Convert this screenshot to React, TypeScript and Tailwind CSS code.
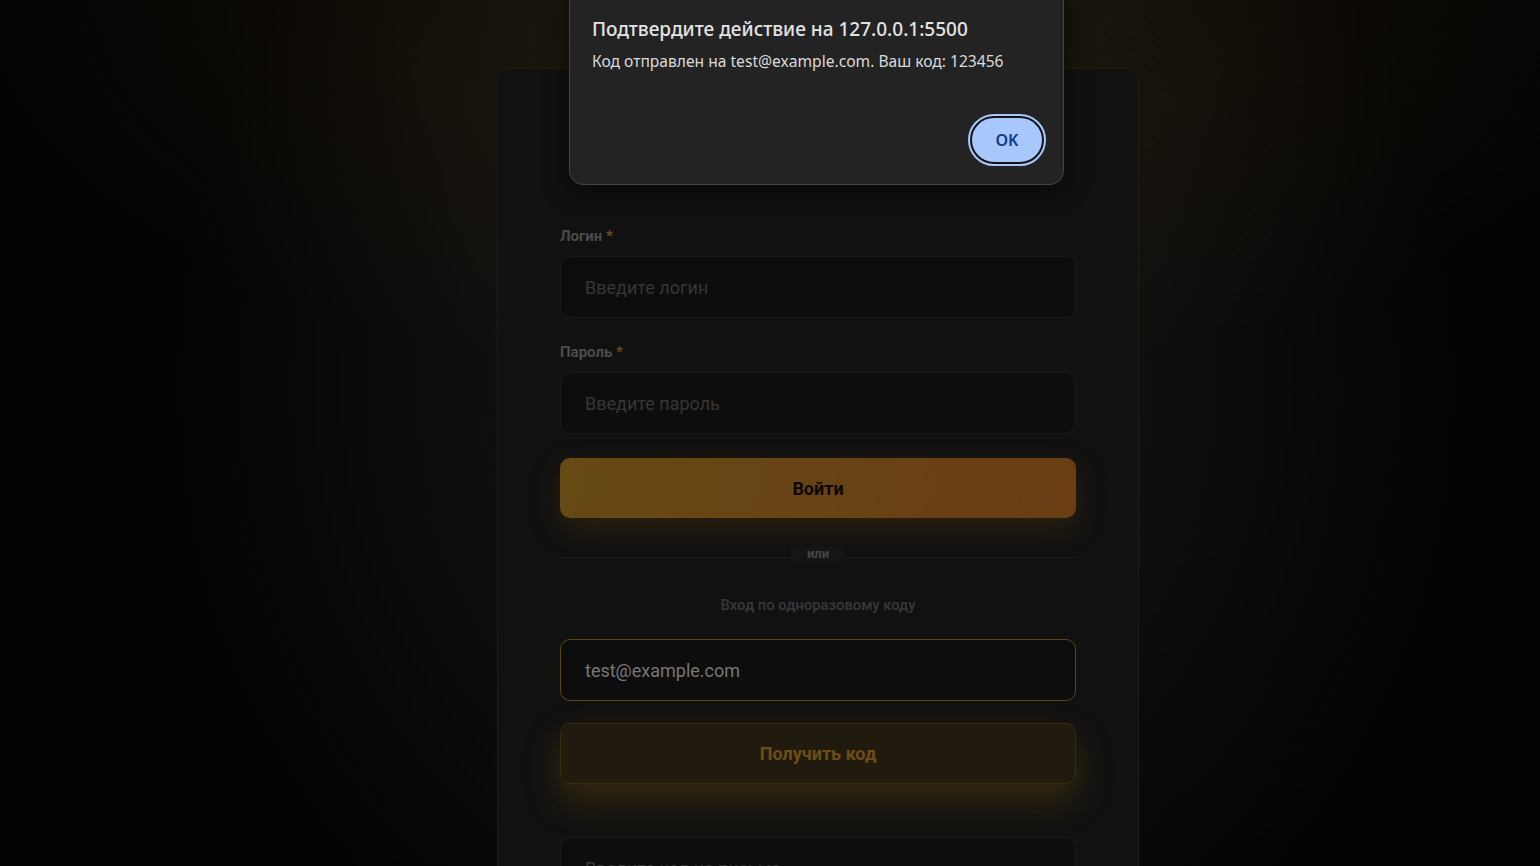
import React from "react";

const form = "font-['Roboto','Liberation_Sans',sans-serif]";

function Field({ label, placeholder }: { label: string; placeholder: string }) {
  return (
    <div className="flex flex-col">
      <label className="text-[15px] leading-5 font-bold text-[#4b4b4b]">
        {label} <span className="text-[#6b4f14]">*</span>
      </label>
      <div className="mt-[10px] h-[62px] rounded-[10px] border border-[#1d1a12] bg-[#0d0d0d] px-6 flex items-center text-[18px] text-[#363636]">
        {placeholder}
      </div>
    </div>
  );
}

function AlertDialog() {
  return (
    <div className="absolute left-[569px] top-[-20px] w-[495px] h-[205px] rounded-[14px] border border-[#444] bg-[#232323] shadow-[0_6px_24px_rgba(0,0,0,0.6)] font-['Noto_Sans','Open_Sans',sans-serif] flex flex-col pl-[22px] pr-[19px] pt-[33px] pb-[20px]">
      <h2 className="text-[19px] leading-[30px] font-medium text-[#e3e3e3]">Подтвердите действие на 127.0.0.1:5500</h2>
      <p className="mt-[5px] text-[15.6px] leading-6 text-[#dadada]">Код отправлен на test@example.com. Ваш код: 123456</p>
      <div className="mt-auto flex justify-end">
        <button className="w-[74px] h-[48px] rounded-full border-2 border-[#141414] outline-2 outline-[#a8c7fa] bg-[#a8c7fa] text-[#0b3c8c] text-[16px] font-semibold">
          OK
        </button>
      </div>
    </div>
  );
}

export default function App() {
  return (
    <div className="relative w-[1540px] h-[866px] overflow-hidden bg-[radial-gradient(ellipse_55%_45%_at_53%_0%,rgba(58,42,14,0.45),transparent),radial-gradient(ellipse_42%_80%_at_53%_45%,#151515_0%,#0e0e0e_55%,#030303_100%)]">
      <div className={`${form} ml-[497px] mt-[68px] w-[642px] rounded-[10px] border border-[#231d10] bg-[#111111] px-[62px] pt-[157px] pb-10`}>
        <div className="flex flex-col">
          <Field label="Логин" placeholder="Введите логин" />
          <div className="mt-6">
            <Field label="Пароль" placeholder="Введите пароль" />
          </div>

          <button className="mt-6 h-[60px] rounded-[10px] bg-[linear-gradient(100deg,#664914,#6a3d13)] text-[18px] font-bold text-[#0b0905] shadow-[0_10px_28px_rgba(95,62,12,0.35)]">
            Войти
          </button>

          <div className="relative mt-[39px] h-px bg-[#241d10]">
            <span className="absolute left-1/2 top-[-11px] -translate-x-1/2 bg-[#151515] px-4 text-[13px] leading-[15px] font-bold text-[#464646]">
              или
            </span>
          </div>

          <p className="mt-[37px] text-center text-[14.8px] leading-5 font-medium text-[#383838]">Вход по одноразовому коду</p>

          <div className="mt-6 h-[62px] rounded-[10px] border border-[#5e4512] bg-[#0d0d0d] px-6 flex items-center text-[18px] text-[#777777]">
            test@example.com
          </div>

          <button className="mt-[22px] h-[61px] rounded-[10px] border border-[#3a2b0e] bg-[#211a0e] text-[18px] font-bold text-[#6c4e14] shadow-[0_16px_34px_rgba(100,70,14,0.45)]">
            Получить код
          </button>

          <div className="mt-[27px] h-px bg-[#1c1810]" />

          <div className="mt-[25px] h-[62px] rounded-[10px] border border-[#1d1a12] bg-[#0d0d0d] px-6 flex items-center text-[18px] text-[#363636]">
            Введите код из письма
          </div>
        </div>
      </div>
      <AlertDialog />
    </div>
  );
}
